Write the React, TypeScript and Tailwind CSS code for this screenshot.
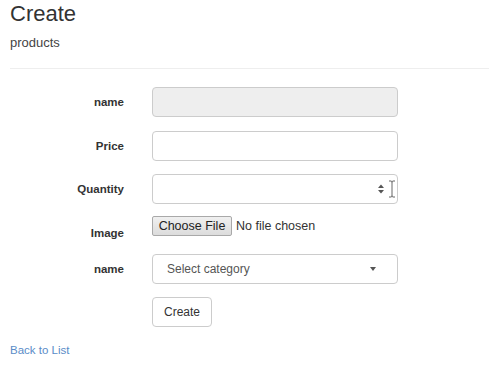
export default function App() {
  return (
    <div className="min-h-screen bg-white px-[10px] text-[#333] [font-family:'Liberation_Sans',Arial,sans-serif]">
      <h1 className="pt-[2px] text-[22px] leading-[1.1] text-[#333]">Create</h1>
      <h4 className="mt-[10px] text-[13px] leading-[1.1] text-[#444]">products</h4>
      <hr className="mt-[18px] border-t border-[#eee]" />

      <form className="mt-[18px] flex flex-col text-[12px]">
        <div className="flex h-[30px] items-center">
          <label className="w-[114px] text-right text-[11.5px] font-bold">name</label>
          <input
            readOnly
            className="ml-[28px] h-[30px] w-[246px] rounded-[4px] border border-[#ccc] bg-[#eee] px-3"
          />
        </div>

        <div className="mt-[14px] flex h-[30px] items-center">
          <label className="w-[114px] text-right text-[11.5px] font-bold">Price</label>
          <input className="ml-[28px] h-[30px] w-[246px] rounded-[4px] border border-[#ccc] bg-white px-3" />
        </div>

        <div className="mt-[13px] flex h-[30px] items-center">
          <label className="w-[114px] text-right text-[11.5px] font-bold">Quantity</label>
          <div className="relative ml-[28px]">
            <input className="h-[30px] w-[246px] rounded-[4px] border border-[#ccc] bg-white px-3" />
            <svg className="absolute right-[14px] top-[10px]" width="6" height="10" viewBox="0 0 6 10">
              <path d="M0 4 L3 0.5 L6 4 Z" fill="#555" />
              <path d="M0 6 L3 9.5 L6 6 Z" fill="#555" />
            </svg>
            <svg className="absolute right-[2px] top-[6px]" width="8" height="18" viewBox="0 0 8 18">
              <path d="M1 1 H3 Q4 1 4 2.5 V15.5 Q4 17 3 17 H1 M7 1 H5 Q4 1 4 2.5 M4 15.5 Q4 17 5 17 H7" stroke="#666" strokeWidth="1" fill="none" />
            </svg>
          </div>
        </div>

        <div className="mt-[12px] flex h-[27px] items-start">
          <label className="mt-[9px] w-[114px] text-right text-[11.5px] font-bold">Image</label>
          <div className="ml-[28px] flex items-center">
            <span className="flex h-[20px] w-[80px] items-center justify-center rounded-[2px] border border-[#a9a9a9] bg-gradient-to-b from-[#f0f0f0] to-[#dcdcdc] text-[12.5px] text-[#222]">
              Choose File
            </span>
            <span className="ml-[4px] text-[12.5px] text-[#333]">No file chosen</span>
          </div>
        </div>

        <div className="mt-[11px] flex h-[30px] items-center">
          <label className="w-[114px] text-right text-[11.5px] font-bold">name</label>
          <div className="ml-[28px] flex h-[30px] w-[246px] items-center justify-between rounded-[4px] border border-[#ccc] bg-white pl-[14px] pr-[21px]">
            <span className="text-[12px] text-[#555]">Select category</span>
            <svg width="6" height="4" viewBox="0 0 6 4">
              <path d="M0 0 H6 L3 4 Z" fill="#555" />
            </svg>
          </div>
        </div>

        <div className="mt-[13px] flex h-[30px] items-center">
          <div className="w-[114px]" />
          <button
            type="button"
            className="ml-[28px] h-[30px] w-[60px] rounded-[4px] border border-[#ccc] bg-white text-[12px] text-[#333]"
          >
            Create
          </button>
        </div>
      </form>

      <a href="#" className="mt-[15px] block text-[11.5px] text-[#5a8cc8]">
        Back to List
      </a>
    </div>
  );
}
